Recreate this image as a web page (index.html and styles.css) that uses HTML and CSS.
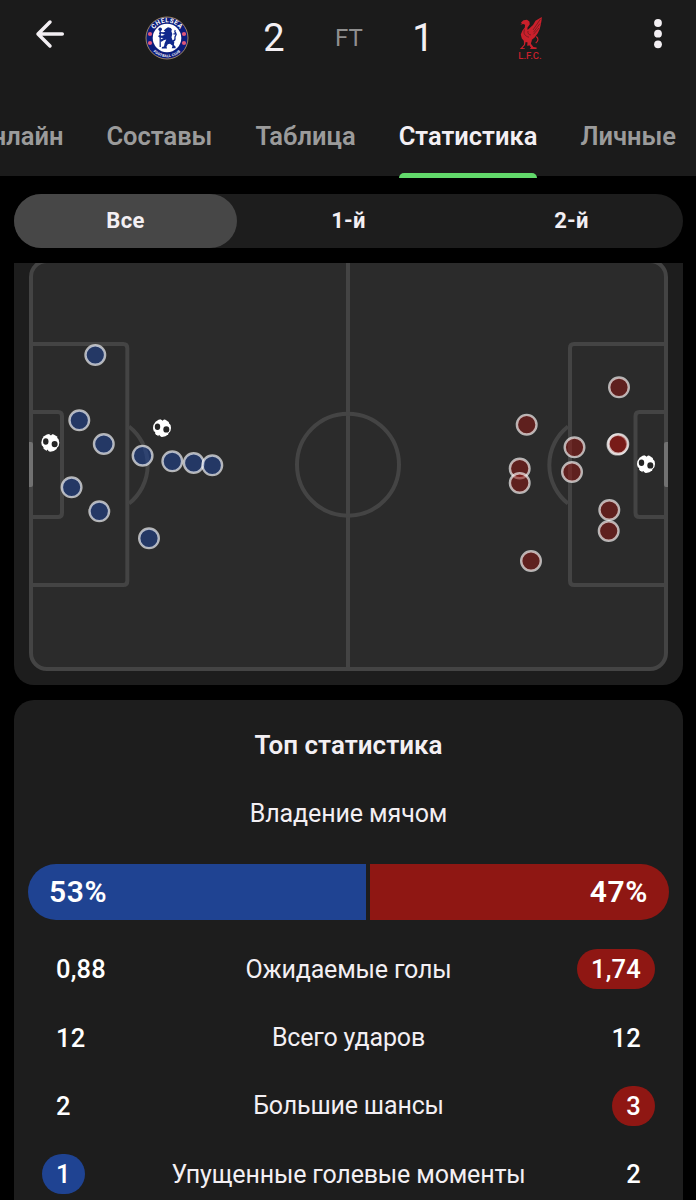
FILE: index.html
```html
<!DOCTYPE html>
<html lang="ru">
<head>
    <meta charset="UTF-8">
    <title>Челси 2 - 1 Ливерпуль</title>
    <meta name="viewport" content="width=device-width, initial-scale=1.0">
    <link rel="stylesheet" href="styles.css">
</head>
<body>

<header class="header">
    <div class="match-bar">
        <button class="icon-btn" aria-label="Назад">
            <svg width="32" height="32" viewBox="0 0 32 32" fill="none" stroke="#f3eff3" stroke-width="3.5" stroke-linecap="round" stroke-linejoin="round">
                <path d="M28.300 16H4M16 4L4 16l12 12"/>
            </svg>
        </button>

        <!-- Chelsea -->
        <svg class="crest" width="44" height="44" viewBox="0 0 44 44">
            <defs>
                <path id="arcTop" d="M6.4 22a15.6 15.6 0 0 1 31.2 0"/>
                <path id="arcBottom" d="M2.8 22a19.2 19.2 0 0 0 38.4 0"/>
            </defs>
            <circle cx="22" cy="22" r="21" fill="#0b1c7c" stroke="#9c8468" stroke-width="1"/>
            <circle cx="22" cy="22" r="14.3" fill="#fff"/>
            <text class="crest-top"><textPath href="#arcTop" startOffset="50%" text-anchor="middle">CHELSEA</textPath></text>
            <text class="crest-bottom"><textPath href="#arcBottom" startOffset="50%" text-anchor="middle">FOOTBALL CLUB</textPath></text>
            <g fill="#e0567b">
                <circle cx="5" cy="18" r="2.1"/>
                <circle cx="5" cy="27" r="2.1"/>
                <circle cx="39" cy="18" r="2.1"/>
                <circle cx="39" cy="27" r="2.1"/>
            </g>
            <path fill="#10288c" d="M21 12.500l2-1.200 2.800.6 1.200 1.900-.7 1.200 1 3-.8 3.300.8 2.500 2 2.200-.4 3 1.600 1.600.2 1.600h-4l.9-2.400-2.600-2-2.200.4-1.300 2.300.5 1.900h-5.300l.3-1.400 2-.6.6-3.200 1.700-3.600-2.600.6-2.200 1.500-1.500-.6.3-1.400 3.200-1.800-3.400-.1-2-1.300.9-1.500 2.900.8 3-1-3.300-1.200-1.500 1-1.200-1.400 1.400-1.300 3.100.3 2-.6-1.700-1z"/>
            <path fill="none" stroke="#10288c" stroke-width="1.300" d="M15.200 13v18M28 25c4-1 .6-3.400 2.600-5.300 2.400-2-2.200-2.700-.4-5.700M28.500 18l3-.6"/>
            <circle cx="15.200" cy="13.200" r="1.800" fill="#10288c"/>
        </svg>

        <span class="score">2</span>
        <span class="status">FT</span>
        <span class="score">1</span>

        <!-- Liverpool -->
        <svg class="crest away-crest" width="30" height="46" viewBox="0 0 30 46">
            <g fill="#c9202b">
                <path d="M5 7.500l2.500-2.200 3.500-.5 2.400 1.700.4 2.700-2.400 3.500.2 2.400L17 10l2.500-4.200L25.800 2l-.3 3.700-.8 4.400-1 3.900-1.800 3.900-3 4.400-3.300 2.600-.5 2.600-2 3-2 .3.500-3.300-2.800-.8-3-3.200-1-4 1.500-3.800 2.500-3.300.3-2.700-2-.8-2.700.8 1.500-1.500z"/>
                <path d="M13 25l2.700-.3-.8 4 2.500 3.300 3.200.6v1.300h-7l1.500-1.200-2.600-3.600zM7.800 25h2.200L9 30l-2.500 3 2.300.2v.9h-5l1.600-1.500L8 29.400z"/>
            </g>
            <path d="M20.300 21.500c2.600 2.200 2 4.600-.6 6.500" fill="none" stroke="#c9202b" stroke-width="1.100"/>
            <path d="M24.500 4L17 15M24 8.500l-6.500 8.700M23 13l-5.500 6.300M8.500 14.500c-1.500 4 .5 6.800 4.500 7.700M12 16c-.6 2.400.8 3.600 3 4" fill="none" stroke="#60191d" stroke-width=".7"/>
            <text class="lfc" x="14" y="43.800" text-anchor="middle">L.F.C.</text>
        </svg>

        <button class="icon-btn more" aria-label="Ещё">
            <svg width="10" height="30" viewBox="0 0 10 30" fill="#f3eff3">
                <circle cx="5" cy="4" r="3.900"/>
                <circle cx="5" cy="14.700" r="3.900"/>
                <circle cx="5" cy="25.300" r="3.900"/>
            </svg>
        </button>
    </div>

    <nav class="tabs">
        <a class="tab">Онлайн</a>
        <a class="tab">Составы</a>
        <a class="tab">Таблица</a>
        <a class="tab active">Статистика</a>
        <a class="tab">Личные</a>
    </nav>
</header>

<main class="content">
    <div class="periods">
        <button class="period selected">Все</button>
        <button class="period">1-й</button>
        <button class="period">2-й</button>
    </div>

    <section class="shotmap">
        <svg width="669" height="422" viewBox="14 263 669 422">
            <defs>
                <g id="ball">
                    <circle r="9" fill="#fff"/>
                    <g fill="#252525">
                        <ellipse cx="-4.500" cy="-1.200" rx="2.700" ry="3.300"/>
                        <ellipse cx="4.300" cy="1.400" rx="3" ry="3.200"/>
                        <path d="M-2-9.200l4.200.3-1.500 1.600zM6.800-6.800l2.200 3.600-1.500-.8zM-8.800 2l.8 3.200 1.500-.2zM-4 8.600l1-1.800 2.200 2.400zM8.900 3.500l-2 3.500-.5-1.800z"/>
                    </g>
                </g>
            </defs>

            <g class="lines">
                <rect class="grass" x="31" y="261" width="635" height="408" rx="16"/>
                <path d="M348 262v407"/>
                <circle cx="348" cy="464.700" r="51"/>
                <path d="M31 344h92.300q4 0 4 4v233q0 4-4 4H31"/>
                <path d="M31 412h27q4 0 4 4v97q0 4-4 4H31"/>
                <path d="M129 426.500a49 49 0 0 1 0 77"/>
                <path d="M666 344h-92q-4 0-4 4v233q0 4 4 4h92"/>
                <path d="M666 412h-26.500q-4 0-4 4v97q0 4 4 4H666"/>
                <path d="M568 426.500a49 49 0 0 0 0 77"/>
            </g>
            <path class="goal" d="M29 487v-45h2q2 0 2 2v41q0 2-2 2zM668 487v-45h-2q-2 0-2 2v41q0 2 2 2z"/>

            <g class="shots home">
                <circle cx="95.300" cy="355" r="9.800"/>
                <circle cx="79.300" cy="420.300" r="9.800"/>
                <circle cx="103.800" cy="444" r="9.800"/>
                <circle cx="142.600" cy="455.700" r="9.800"/>
                <circle cx="172.300" cy="461.300" r="9.800"/>
                <circle cx="193.700" cy="463" r="9.800"/>
                <circle cx="212.300" cy="465.300" r="9.800"/>
                <circle cx="71.600" cy="487.300" r="9.800"/>
                <circle cx="99.300" cy="511.300" r="9.800"/>
                <circle cx="149" cy="538.300" r="9.800"/>
            </g>
            <g class="shots away">
                <circle cx="619" cy="387.300" r="9.800"/>
                <circle cx="526.700" cy="424.700" r="9.800"/>
                <circle cx="574.500" cy="447.300" r="9.800"/>
                <circle cx="572" cy="472" r="9.800"/>
                <circle cx="617.500" cy="444.600" r="9.800"/>
                <circle cx="618.300" cy="444" r="9.800"/>
                <circle cx="519.700" cy="468.500" r="9.800"/>
                <circle cx="519.700" cy="483" r="9.800"/>
                <circle cx="609.300" cy="510" r="9.800"/>
                <circle cx="608.700" cy="531" r="9.800"/>
                <circle cx="531" cy="561" r="9.800"/>
            </g>
            <use href="#ball" x="50.300" y="442.700"/>
            <use href="#ball" x="162" y="428"/>
            <use href="#ball" x="646" y="464"/>
        </svg>
    </section>

    <section class="stats">
        <h2>Топ статистика</h2>
        <div class="possession-label">Владение мячом</div>
        <div class="possession">
            <div class="home-share" style="width: 53%">53%</div>
            <div class="away-share" style="width: 47%">47%</div>
        </div>

        <div class="stat-row">
            <span class="value">0,88</span>
            <span class="stat-name">Ожидаемые голы</span>
            <span class="value away-best">1,74</span>
        </div>
        <div class="stat-row">
            <span class="value">12</span>
            <span class="stat-name">Всего ударов</span>
            <span class="value">12</span>
        </div>
        <div class="stat-row">
            <span class="value">2</span>
            <span class="stat-name">Большие шансы</span>
            <span class="value away-best">3</span>
        </div>
        <div class="stat-row">
            <span class="value home-best">1</span>
            <span class="stat-name">Упущенные голевые моменты</span>
            <span class="value">2</span>
        </div>
    </section>
</main>

</body>
</html>
```
FILE: styles.css
```css
* {
    box-sizing: border-box;
}

body {
    font-family: Roboto, "Noto Sans", sans-serif;
    background: #000;
    color: #f3eff3;
    margin: 0;
    height: 1200px;
    overflow: hidden;
}

button {
    background: none;
    border: none;
    padding: 0;
    color: inherit;
    font-family: inherit;
}

svg {
    display: block;
}

.header {
    background: #1b1b1b;
    height: 176px;
}

.match-bar {
    display: grid;
    grid-template-columns: 100px 134px 80px 70px 78px 136px 98px;
    align-items: center;
    justify-items: center;
    height: 76px;
}

.icon-btn {
    margin-bottom: 8px;
}

.more {
    margin-left: 22px;
}

.crest-top {
    font-size: 6.4px;
    font-weight: 700;
    letter-spacing: 0.4px;
    fill: #fff;
}

.crest-bottom {
    font-size: 3.6px;
    font-weight: 700;
    letter-spacing: 0.2px;
    fill: #fff;
}

.away-crest {
    margin-left: 1px;
}

.lfc {
    font-size: 9.5px;
    font-weight: 500;
    fill: #c9202b;
}

.score {
    font-size: 38px;
    line-height: 44px;
}

.status {
    font-size: 24px;
    color: #8f8f8f;
}

.tabs {
    display: flex;
    justify-content: flex-end;
    gap: 43px;
    height: 102px;
    padding-right: 20px;
}

.tab {
    position: relative;
    flex-shrink: 0;
    padding-top: 42px;
    font-size: 25.5px;
    line-height: 36px;
    font-weight: 600;
    color: #9b9b9b;
}

.tab.active {
    color: #f3eff3;
}

.tab.active::after {
    content: "";
    position: absolute;
    left: 0;
    right: 0;
    bottom: 0;
    height: 5px;
    border-radius: 5px 5px 0 0;
    background: #62d96b;
}

.content {
    padding: 18px 13px 0 14px;
}

.periods {
    display: flex;
    height: 54px;
    margin-bottom: 15px;
    border-radius: 27px;
    background: #1d1d1d;
}

.period {
    flex: 1;
    padding-bottom: 1px;
    border-radius: 27px;
    font-size: 22px;
    font-weight: 700;
    letter-spacing: 0.3px;
}

.period.selected {
    background: #474747;
}

.shotmap {
    height: 422px;
    margin-bottom: 15px;
    border-radius: 0 0 20px 20px;
    background: #1d1d1d;
    overflow: hidden;
}

.lines {
    fill: none;
    stroke: #444;
    stroke-width: 4;
}

.grass {
    fill: #2b2b2b;
}

.goal {
    fill: #717171;
}

.shots {
    stroke: rgba(255, 255, 255, 0.65);
    stroke-width: 2.4;
}

.home {
    fill: rgba(31, 67, 150, 0.55);
}

.away {
    fill: rgba(143, 23, 19, 0.52);
}

.stats {
    height: 540px;
    padding: 27px 14px 0;
    border-radius: 20px 20px 0 0;
    background: #1d1d1d;
}

h2 {
    margin: 0;
    font-size: 26px;
    line-height: 36px;
    font-weight: 600;
    text-align: center;
}

.possession-label {
    margin-top: 33px;
    font-size: 25px;
    line-height: 36px;
    letter-spacing: -0.1px;
    text-align: center;
}

.possession {
    display: flex;
    gap: 4px;
    height: 56px;
    margin: 32px 0 15px;
    font-size: 30px;
    line-height: 56px;
    font-weight: 600;
    letter-spacing: 0.6px;
    color: #fff;
}

.home-share,
.away-share {
    padding: 0 21px;
}

.home-share {
    border-radius: 28px 0 0 28px;
    background: #1f4392;
}

.away-share {
    border-radius: 0 28px 28px 0;
    background: #8f1713;
    text-align: right;
}

.stat-row {
    display: flex;
    align-items: center;
    justify-content: space-between;
    height: 68.4px;
    padding: 0 14px;
}

.value {
    padding: 0 14px;
    border-radius: 20px;
    font-size: 25.500px;
    line-height: 40px;
    font-weight: 500;
    letter-spacing: 0.2px;
    color: #fff;
}

.stat-name {
    flex: 1;
    font-size: 25px;
    letter-spacing: -0.160px;
    text-align: center;
}

.away-best {
    background: #8f1713;
}

.home-best {
    background: #1f4392;
}
```
